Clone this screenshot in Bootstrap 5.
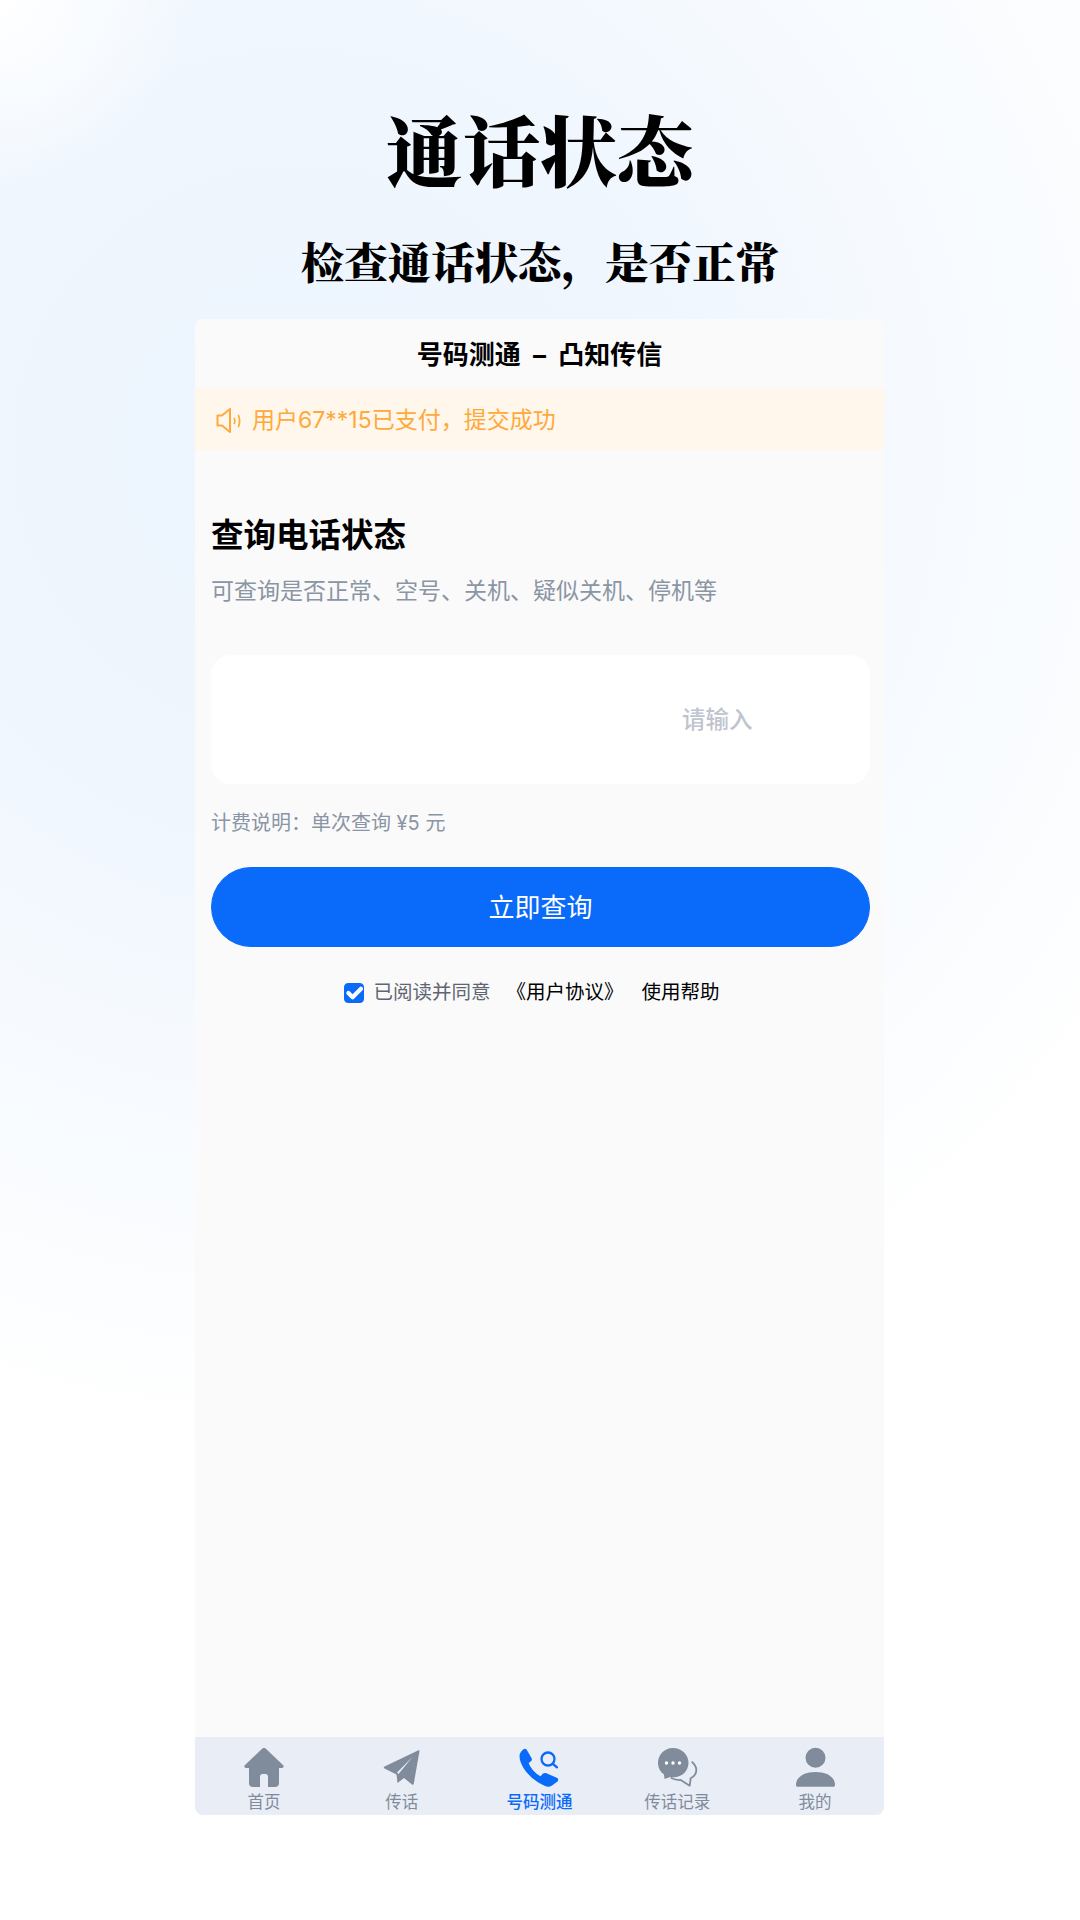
<!DOCTYPE html>
<html lang="zh-CN">
<head>
    <meta charset="UTF-8">
    <meta name="viewport" content="width=device-width, initial-scale=1.0">
    <title>通话状态</title>
    <link href="https://cdn.jsdelivr.net/npm/bootstrap@5.3.0/dist/css/bootstrap.min.css" rel="stylesheet">
    <style>
        body {
            width: 1080px;
            height: 1920px;
            overflow: hidden;
            font-family: Inter, "Noto Sans CJK SC", sans-serif;
            background: #fff;
            background-image:
                radial-gradient(circle 190px at 0 0, #fff 0%, rgba(255,255,255,0) 100%),
                radial-gradient(ellipse 1000px 1000px at 300px 450px, #edf5fe 0%, #eff6fe 35%, rgba(255,255,255,0) 100%);
        }
        .hero-title {
            font-family: "Noto Serif CJK SC", "Liberation Serif", "Noto Sans CJK SC", serif;
            font-size: 77px;
            font-weight: 900;
            line-height: 100px;
            color: #000;
            margin: 0;
            padding-top: 98px;
        }
        .hero-sub {
            font-family: "Noto Serif CJK SC", "Liberation Serif", "Noto Sans CJK SC", serif;
            font-size: 43.5px;
            font-weight: 900;
            line-height: 60px;
            color: #000;
            margin: 0;
            padding-top: 32px;
        }
        .phone-card {
            width: 689px;
            height: 1496px;
            margin: 29px 0 0 195px;
            background: #fafafa;
            border-radius: 8px;
            overflow: hidden;
        }
        .card-head {
            height: 69px;
            padding-top: 2px;
            font-size: 26px;
            font-weight: 700;
            color: #000;
            white-space: pre;
        }
        .notice-bar {
            height: 62px;
            padding: 2px 0 0 21px;
            gap: 10px;
            background: #fff6ec;
            color: #ffa93a;
            font-size: 23px;
        }
        .query-block { padding: 64px 14px 0 16px; }
        .query-title {
            font-size: 32.500px;
            font-weight: 700;
            line-height: 44px;
            color: #000;
            margin: 0;
        }
        .query-desc {
            font-size: 23px;
            line-height: 34px;
            color: #8a95a5;
            margin: 16px 0 0;
        }
        .phone-input {
            height: 129px;
            margin-top: 47px;
            padding: 0 0 0 471px;
            font-size: 23.500px;
            font-weight: 500;
            border: 0;
            border-radius: 20px;
            background: #fff;
        }
        .phone-input::placeholder { color: #c0c4cf; }
        .fee-note {
            font-size: 20px;
            line-height: 30px;
            color: #8a95a5;
            margin: 24px 0 0;
        }
        .query-btn {
            height: 80px;
            margin-top: 29px;
            font-size: 26px;
            background: #0a6afa;
            border-color: #0a6afa;
        }
        .agree-row {
            height: 30px;
            margin-top: 31px;
            padding-right: 17px;
            font-size: 19.500px;
            color: #000;
        }
        .agree-row .form-check-input {
            width: 20px;
            height: 20px;
            margin: 0 9px 0 0;
            border-radius: 4px;
            background-color: #0a6afa;
            border-color: #0a6afa;
            background-size: 28px;
        }
        .agree-text { color: #5f6672; margin-right: 16px; }
        .agree-help { margin-left: 18px; }
        .tab-strip {
            height: 78px;
            padding-top: 9px;
            background: #e9edf6;
        }
        .tab-item {
            width: 20%;
            color: #808c9c;
            font-size: 16.500px;
            line-height: 22px;
        }
        .tab-item svg { width: 44px; height: 44px; display: block; margin-bottom: 1px; }
        .tab-item.is-on { color: #0a6afa; font-weight: 500; }
    </style>
</head>
<body>

    <div class="text-center">
        <h1 class="hero-title">通话状态</h1>
        <h2 class="hero-sub">检查通话状态，是否正常</h2>
    </div>

    <div class="phone-card d-flex flex-column">
        <div class="card-head d-flex align-items-center justify-content-center">号码测通  –  凸知传信</div>
        <div class="notice-bar d-flex align-items-center">
            <svg width="26" height="26" viewBox="0 0 26 26" fill="none" stroke="#ffa93a" stroke-width="2" stroke-linejoin="round" stroke-linecap="round">
                <path d="M1.500 8.500H6L14 2v23l-8-6.500H1.500z"/>
                <path d="M18.300 11.500c.8 1.600.8 3.200 0 4.800" stroke-width="1.700"/>
                <path d="M22.500 8.500c1.500 3.600 1.500 7.400 0 11" stroke-width="1.700"/>
            </svg>
            <span>用户67**15已支付，提交成功</span>
        </div>

        <div class="query-block flex-grow-1">
            <h3 class="query-title">查询电话状态</h3>
            <p class="query-desc">可查询是否正常、空号、关机、疑似关机、停机等</p>
            <input type="text" class="form-control phone-input" placeholder="请输入">
            <p class="fee-note">计费说明：单次查询 ¥5 元</p>
            <button type="button" class="btn btn-primary rounded-pill w-100 query-btn">立即查询</button>
            <div class="agree-row d-flex align-items-center justify-content-center">
                <input class="form-check-input" type="checkbox" checked>
                <span class="agree-text">已阅读并同意</span>
                <span>《用户协议》</span>
                <span class="agree-help">使用帮助</span>
            </div>
        </div>

        <div class="tab-strip d-flex">
            <div class="tab-item d-flex flex-column align-items-center">
                <svg viewBox="0 0 44 44" fill="#808c9c"><path d="M22 2c1 0 1.600.4 2.400 1.200L41 19c1.200 1.400.6 3-1 3h-3v15c0 2.400-1.400 4-4 4h-7V31c0-1.800-1-3-2.500-3h-3c-1.500 0-2.500 1.200-2.500 3v10h-7c-2.600 0-4-1.600-4-4V22H4c-1.600 0-2.200-1.600-1-3L19.600 3.200C20.400 2.400 21 2 22 2z"/></svg>
                <span>首页</span>
            </div>
            <div class="tab-item d-flex flex-column align-items-center">
                <svg viewBox="0 0 44 44" fill="#808c9c"><path d="M39 4 4.500 20.500c-1 .5-1 1.500 0 2l12 6 1 8.500L24 32l8 6.500c.8.500 1.600.1 1.800-1L39.500 5z"/><path d="M32.500 11 17 26.500l1.500 1.500z" fill="#e9edf6"/></svg>
                <span>传话</span>
            </div>
            <div class="tab-item is-on d-flex flex-column align-items-center">
                <svg viewBox="0 0 44 44" fill="#0a6afa"><path d="M6.500 3.200C7.700 2.300 9 2.600 9.700 3.800L14.500 12c.7 1.200.5 2.500-.5 3.300L11.700 17c1.800 5 6.300 10.300 11.800 13.300l2.300-2.500c1-1 2.400-1.200 3.600-.5L40.300 32c1.200 1 1.200 2.500.2 3.500L35 39.500c-2 1.500-4.500 1.700-7 .5C14 34 3 21 2.500 10.500 2.400 8 3.500 5.500 6.500 3.200z"/><circle cx="31" cy="13" r="6.500" fill="none" stroke="#0a6afa" stroke-width="2.300"/><path d="m36 18 4 3.300" stroke="#0a6afa" stroke-width="2.300" stroke-linecap="round"/></svg>
                <span>号码测通</span>
            </div>
            <div class="tab-item d-flex flex-column align-items-center">
                <svg viewBox="0 0 44 44"><path d="M36.700 15.700c3 2.500 4.600 5.300 4.600 8.300 0 3.500-2 6.500-5.600 8.300l-1 7.400-9-5.700c-3.500.2-7-.8-10-2.300" fill="none" stroke="#808c9c" stroke-width="1.800" stroke-linejoin="round"/><path d="M18 2C9 2 3 9 3 17c0 5 2 8.500 6 11.500l.5 4.500 5.500-2c1.200.2 2.300.3 3.500.3 9 0 15-6.800 15-14.500S27 2 18 2z" fill="#808c9c"/><circle cx="11.500" cy="17" r="1.700" fill="#fff"/><circle cx="18" cy="17" r="1.700" fill="#fff"/><circle cx="24.500" cy="17" r="1.700" fill="#fff"/></svg>
                <span>传话记录</span>
            </div>
            <div class="tab-item d-flex flex-column align-items-center">
                <svg viewBox="0 0 44 44" fill="#808c9c"><circle cx="22.500" cy="11.700" r="10"/><path d="M3 39c0-8 8-13 19.500-13S42 31 42 39c0 1-.5 1.700-1.500 1.700h-36C3.500 40.700 3 40 3 39z"/></svg>
                <span>我的</span>
            </div>
        </div>
    </div>

<script src="https://cdn.jsdelivr.net/npm/bootstrap@5.3.0/dist/js/bootstrap.bundle.min.js"></script>
</body>
</html>
